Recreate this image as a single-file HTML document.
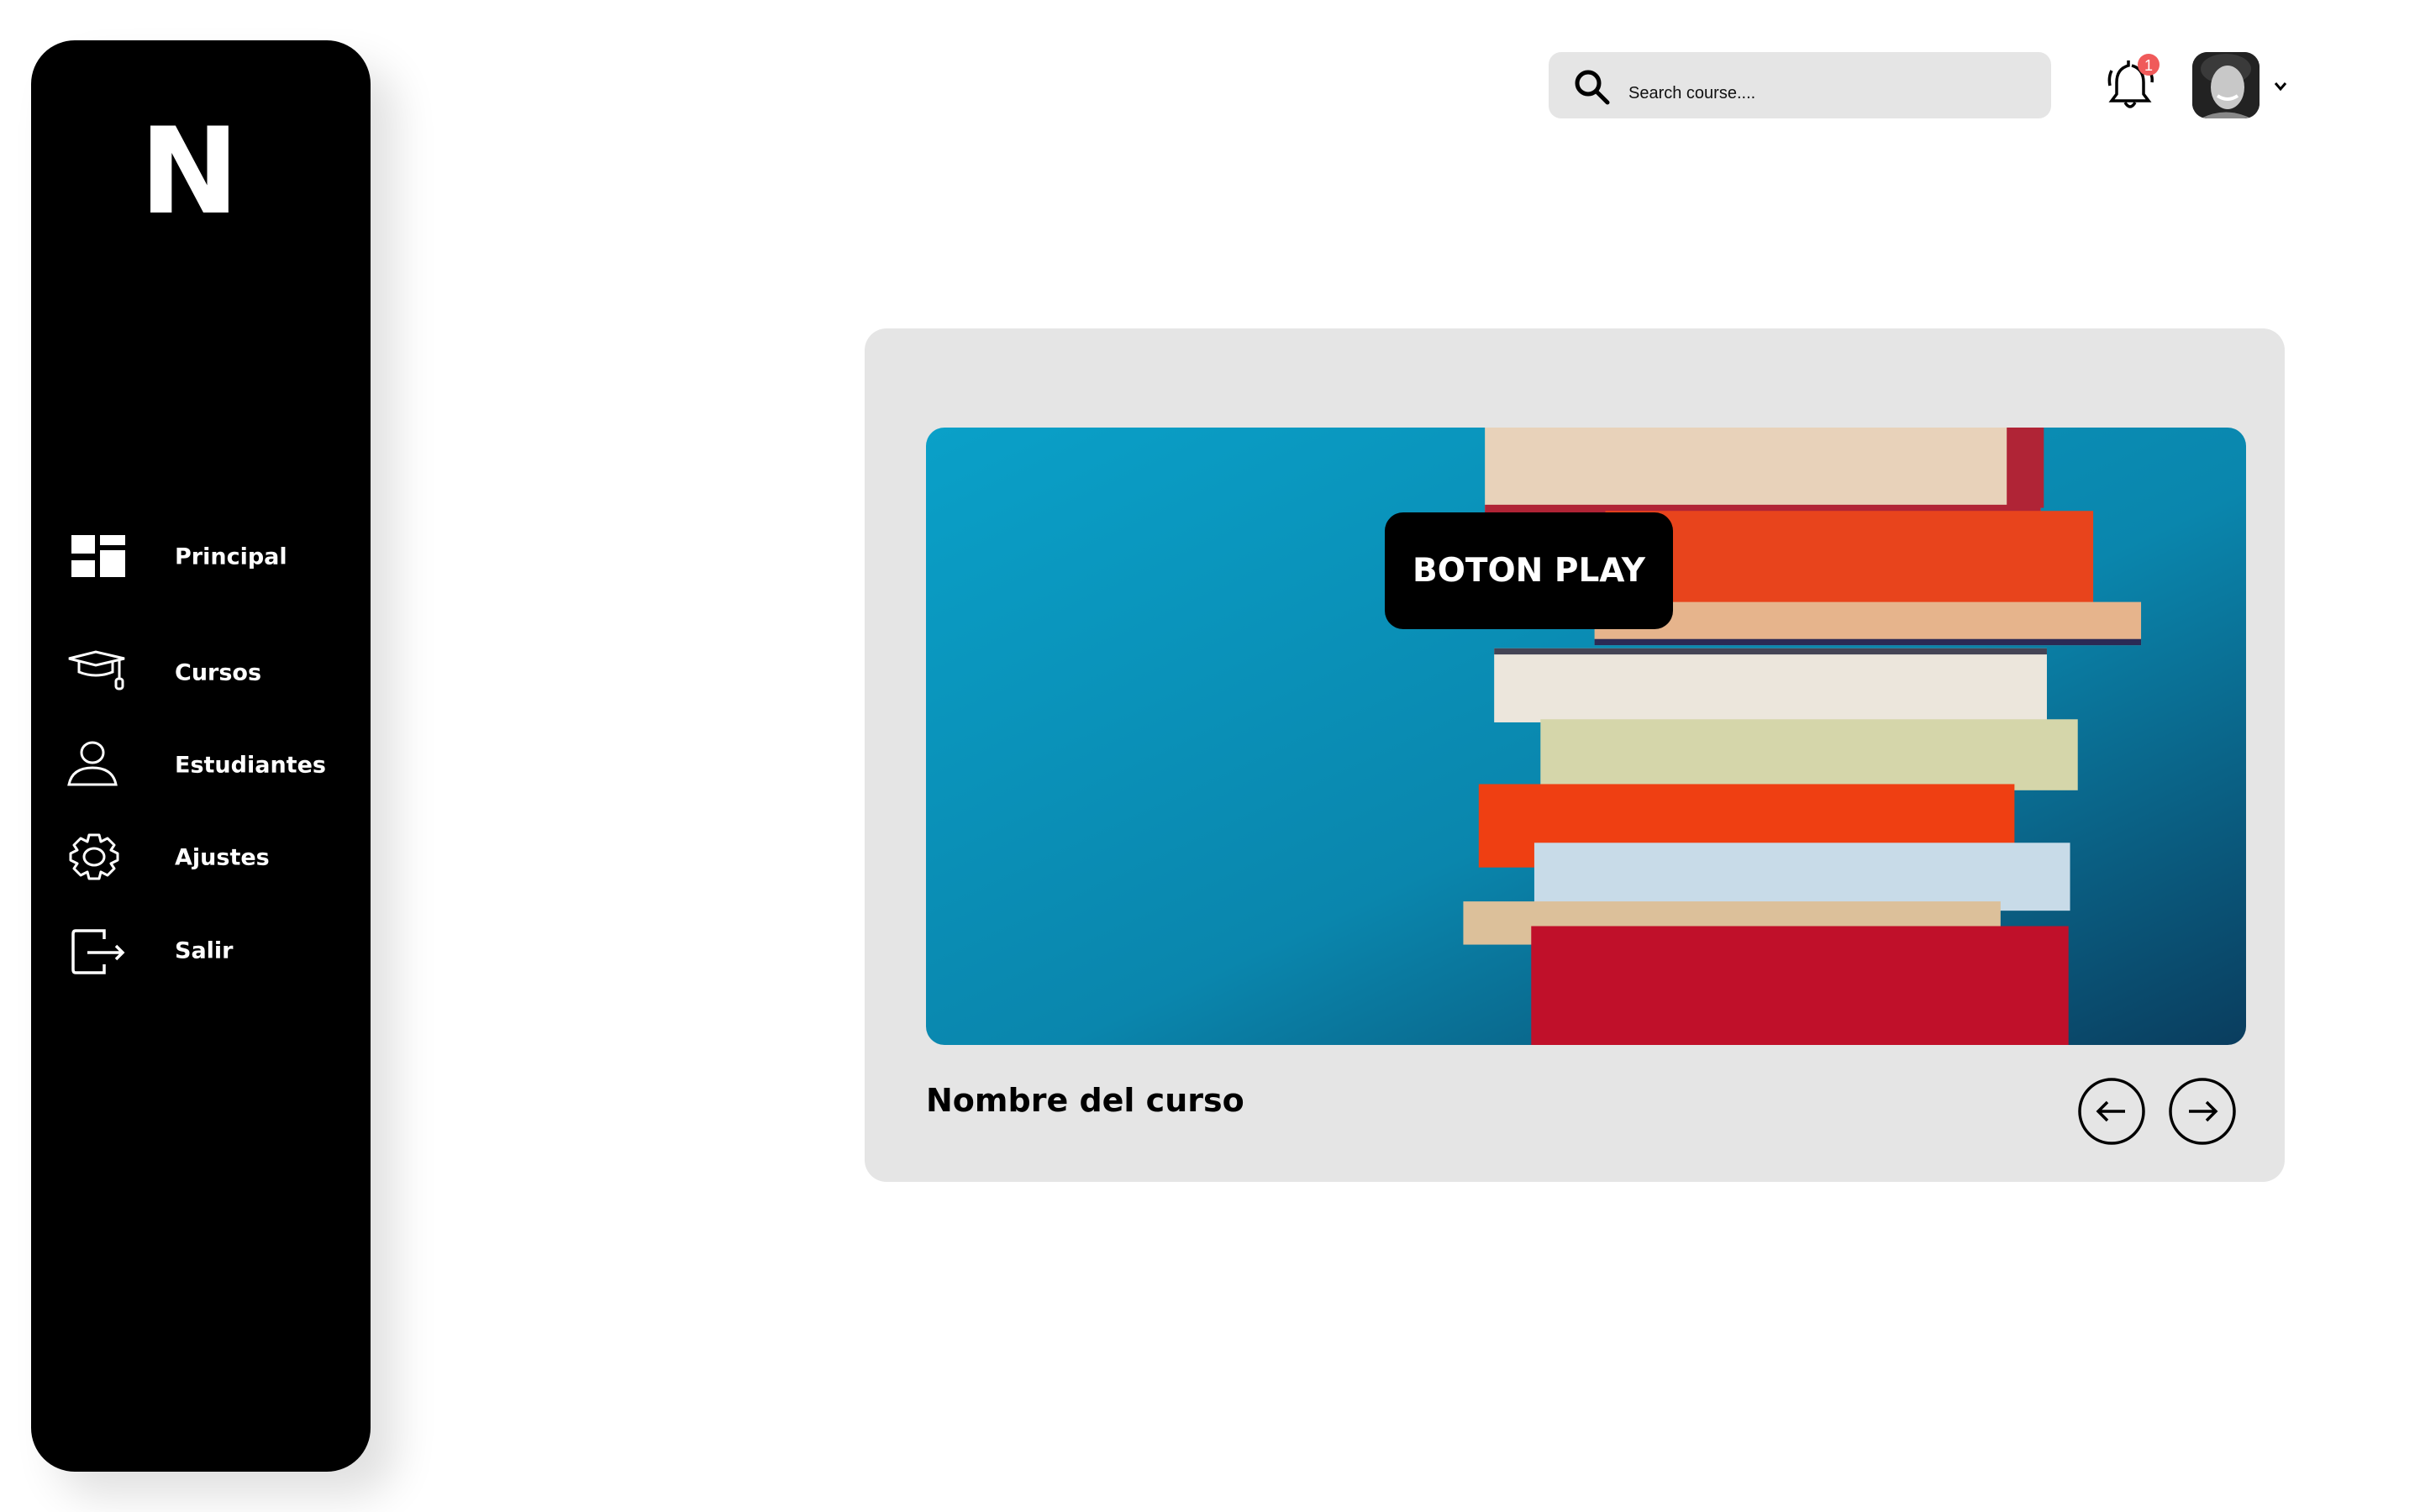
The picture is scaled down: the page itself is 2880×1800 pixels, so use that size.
<!DOCTYPE html>
<html><head><meta charset="utf-8"><style>
*{margin:0;padding:0;box-sizing:border-box}
body{width:2880px;height:1800px;background:#fff;position:relative;overflow:hidden;font-family:"DejaVu Sans","Liberation Sans",sans-serif}
.sb{position:absolute;left:37px;top:48px;width:404px;height:1704px;background:#000;border-radius:52px;box-shadow:30px 30px 50px rgba(0,0,0,0.12)}
.logo{position:absolute;left:166px;top:122px;color:#fff;font:bold 142px "DejaVu Sans",sans-serif;letter-spacing:-4px}
.mi{position:absolute;left:208px;color:#fff;font-weight:bold;font-size:27px;transform:translateY(-50%)}
.ic{position:absolute}
.search{position:absolute;left:1843px;top:62px;width:598px;height:79px;background:#e5e5e5;border-radius:15px}
.search span{position:absolute;left:95px;top:38px;font:20px "Liberation Sans",sans-serif;color:#111}
.card{position:absolute;left:1029px;top:391px;width:1690px;height:1016px;background:#e5e5e5;border-radius:26px}
.img{position:absolute;left:1102px;top:509px;width:1571px;height:735px;border-radius:22px;overflow:hidden}
.play{position:absolute;left:1648px;top:610px;width:343px;height:139px;background:#000;border-radius:22px;color:#fff;font:bold 39px "DejaVu Sans",sans-serif;display:flex;align-items:center;justify-content:center}
.title{position:absolute;left:1102px;top:1288px;font:bold 38px "DejaVu Sans",sans-serif;color:#000}
</style></head><body>
<div class="sb"></div>
<div class="logo">N</div>
<svg class="ic" style="left:83px;top:635px" width="68" height="56" viewBox="0 0 68 56"><rect x="2" y="2" width="28" height="22" fill="#fff"/><rect x="36" y="2" width="30" height="12" fill="#fff"/><rect x="2" y="32" width="28" height="20" fill="#fff"/><rect x="36" y="20" width="30" height="32" fill="#fff"/></svg>
<div class="mi" style="top:663px">Principal</div>
<svg class="ic" style="left:80px;top:772px" width="72" height="52" viewBox="0 0 72 52" fill="none" stroke="#fff" stroke-width="3"><path d="M2 12 L34 4 L68 12 L34 20 Z"/><path d="M14 16 V28 Q34 36 54 28 V16"/><path d="M62 14 V36"/><rect x="58" y="36" width="8" height="12" rx="3"/></svg>
<div class="mi" style="top:801px">Cursos</div>
<svg class="ic" style="left:80px;top:880px" width="60" height="56" viewBox="0 0 60 56" fill="none" stroke="#fff" stroke-width="3"><ellipse cx="30" cy="16" rx="13" ry="12"/><path d="M2 54 Q6 34 30 34 Q54 34 58 54 Z"/></svg>
<div class="mi" style="top:911px">Estudiantes</div>
<svg class="ic" style="left:80px;top:990px" width="64" height="60" viewBox="0 0 64 60" fill="none" stroke="#fff" stroke-width="3"><path d="M26 4 H38 L40 12 L48 8 L56 16 L52 22 L60 26 V34 L52 38 L56 44 L48 52 L40 48 L38 56 H26 L24 48 L16 52 L8 44 L12 38 L4 34 V26 L12 22 L8 16 L16 8 L24 12 Z" stroke-linejoin="round"/><ellipse cx="32" cy="30" rx="12" ry="10"/></svg>
<div class="mi" style="top:1021px">Ajustes</div>
<svg class="ic" style="left:84px;top:1104px" width="66" height="58" viewBox="0 0 66 58" fill="none" stroke="#fff" stroke-width="3.5"><path d="M40 14 V4 H6 Q3 4 3 8 V50 Q3 54 6 54 H40 V44"/><path d="M20 30 H62 M54 22 L62 30 L54 38"/></svg>
<div class="mi" style="top:1132px">Salir</div>

<div class="search"><svg style="position:absolute;left:30px;top:20px" width="44" height="44" viewBox="0 0 44 44" fill="none" stroke="#000" stroke-width="5"><circle cx="17" cy="17" r="13"/><path d="M27 27 L40 40" stroke-linecap="round"/></svg><span>Search course....</span></div>
<svg style="position:absolute;left:2505px;top:62px" width="70" height="72" viewBox="0 0 70 72" fill="none" stroke="#000" stroke-width="3.5"><path d="M28 10 V16 Q14 20 14 36 V50 L8 58 H52 L46 50 V36 Q46 20 32 16"/><path d="M24 60 Q30 70 36 60"/><path d="M8 22 Q4 30 6 40 M54 24 Q57 30 56 36"/><circle cx="52" cy="15" r="13" fill="#f05a5a" stroke="none"/><text x="52" y="22" font-size="18" fill="#fff" stroke="none" text-anchor="middle" font-family="Liberation Sans">1</text></svg>
<div style="position:absolute;left:2609px;top:62px;width:80px;height:79px;border-radius:18px;overflow:hidden;background:#1a1a1a">
<svg width="80" height="79" viewBox="0 0 80 79"><rect width="80" height="79" fill="#222"/><ellipse cx="40" cy="20" rx="30" ry="18" fill="#3a3a3a"/><ellipse cx="42" cy="42" rx="20" ry="26" fill="#c8c8c8"/><path d="M30 52 Q42 60 54 52" stroke="#fff" stroke-width="4" fill="none"/><path d="M10 79 Q40 64 70 79Z" fill="#888"/></svg></div>
<svg style="position:absolute;left:2705px;top:96px" width="18" height="14" viewBox="0 0 18 14" fill="none" stroke="#000" stroke-width="3"><path d="M3 3 L9 10 L15 3"/></svg>

<div class="card"></div>
<div class="img"><svg width="1571" height="735" viewBox="600 277 855 400" preserveAspectRatio="none">
<defs><linearGradient id="bg" x1="0" y1="0" x2="1" y2="1"><stop offset="0" stop-color="#0aa0c8"/><stop offset="0.55" stop-color="#0a86ad"/><stop offset="1" stop-color="#0a3d5e"/></linearGradient></defs>
<rect x="600" y="277" width="855" height="400" fill="url(#bg)"/>
<rect x="962" y="277" width="360" height="54" fill="#e8d2ba"/><rect x="1300" y="277" width="24" height="52" fill="#b02436"/><rect x="962" y="327" width="360" height="5" fill="#b02436"/>
<rect x="1040" y="331" width="316" height="60" fill="#e8441c"/>
<rect x="1033" y="390" width="354" height="28" fill="#e6b48c"/><rect x="1033" y="414" width="354" height="4" fill="#2b2a55"/>
<rect x="968" y="420" width="358" height="48" fill="#ece6dc"/><rect x="968" y="420" width="358" height="4" fill="#445"/>
<rect x="998" y="466" width="348" height="46" fill="#d5d6aa"/>
<rect x="958" y="508" width="347" height="54" fill="#ef3f12"/>
<rect x="994" y="546" width="347" height="44" fill="#c8dbe8"/>
<rect x="948" y="584" width="348" height="28" fill="#dcc09a"/>
<rect x="992" y="600" width="348" height="77" fill="#c0102a"/>
</svg></div>
<div class="play">BOTON PLAY</div>
<div class="title">Nombre del curso</div>
<svg style="position:absolute;left:2470px;top:1280px" width="200" height="88" viewBox="0 0 200 88" fill="none" stroke="#000" stroke-width="3.5"><circle cx="43" cy="43" r="38"/><path d="M59 43 H27 M38 32 L27 43 L38 54"/><circle cx="151" cy="43" r="38"/><path d="M135 43 H167 M156 32 L167 43 L156 54"/></svg>
</body></html>
